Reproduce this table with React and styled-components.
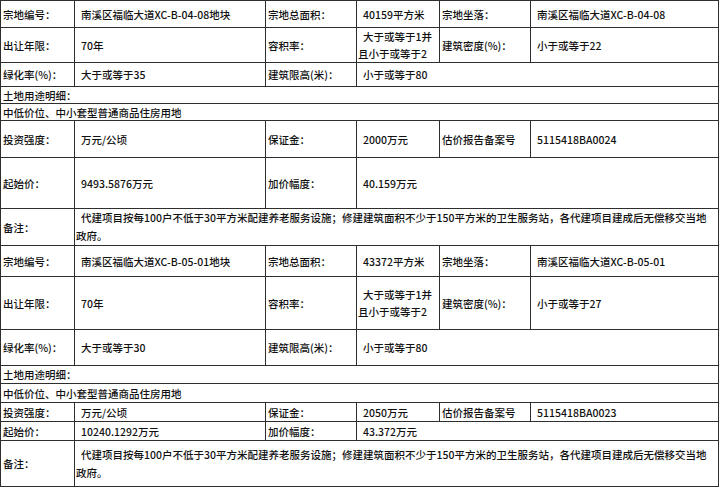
import React from "react";
import styled, { createGlobalStyle } from "styled-components";

const GlobalStyle = createGlobalStyle`
  html, body {
    margin: 0;
    padding: 0;
    background: #fff;
  }
  body {
    font-family: "Noto Sans CJK SC", "Microsoft YaHei", sans-serif;
  }
`;

const Table = styled.table`
  border-collapse: collapse;
  table-layout: fixed;
  width: 718px;
  font-size: 10.5px;
  font-weight: 500;
  color: #111;
`;

const Col = styled.col`
  width: ${(p) => p.$w}px;
`;

const Row = styled.tr`
  height: ${(p) => p.$h}px;
`;

const Cell = styled.td`
  border: 1px solid #2e2e2e;
  padding: 0 1px;
  vertical-align: middle;
  word-break: break-all;
`;

const Label = styled(Cell)`
  padding-left: 2px;
  line-height: 15px;
  white-space: nowrap;
`;

const Value = styled(Cell)`
  line-height: 17px;
  text-indent: 5px;
`;

const Note = styled(Value)`
  line-height: 18px;
  padding-right: 5px;
`;

const NOTE =
  "代建项目按每100户不低于30平方米配建养老服务设施；修建建筑面积不少于150平方米的卫生服务站，各代建项目建成后无偿移交当地政府。";

const lots = [
  {
    id: "04-08",
    no: "南溪区福临大道XC-B-04-08地块",
    area: "40159平方米",
    loc: "南溪区福临大道XC-B-04-08",
    far: "大于或等于1并且小于或等于2",
    density: "小于或等于22",
    green: "大于或等于35",
    limit: "小于或等于80",
    use: "中低价位、中小套型普通商品住房用地",
    invest: "万元/公顷",
    deposit: "2000万元",
    report: "5115418BA0024",
    price: "9493.5876万元",
    step: "40.159万元",
    rows: [27, 35, 24, 17, 17, 37, 51, 37],
  },
  {
    id: "05-01",
    no: "南溪区福临大道XC-B-05-01地块",
    area: "43372平方米",
    loc: "南溪区福临大道XC-B-05-01",
    far: "大于或等于1并且小于或等于2",
    density: "小于或等于27",
    green: "大于或等于30",
    limit: "小于或等于80",
    use: "中低价位、中小套型普通商品住房用地",
    invest: "万元/公顷",
    deposit: "2050万元",
    report: "5115418BA0023",
    price: "10240.1292万元",
    step: "43.372万元",
    rows: [31, 53, 36, 18, 19, 19, 19, 46],
  },
];

const Lot = ({ lot }) => {
  const h = lot.rows;
  return (
    <>
      <Row $h={h[0]}>
        <Label>宗地编号：</Label>
        <Value>{lot.no}</Value>
        <Label>宗地总面积：</Label>
        <Value>{lot.area}</Value>
        <Label>宗地坐落：</Label>
        <Value>{lot.loc}</Value>
      </Row>
      <Row $h={h[1]}>
        <Label>出让年限：</Label>
        <Value>70年</Value>
        <Label>容积率：</Label>
        <Value>{lot.far}</Value>
        <Label>建筑密度(%)：</Label>
        <Value>{lot.density}</Value>
      </Row>
      <Row $h={h[2]}>
        <Label>绿化率(%)：</Label>
        <Value>{lot.green}</Value>
        <Label>建筑限高(米)：</Label>
        <Value colSpan={3}>{lot.limit}</Value>
      </Row>
      <Row $h={h[3]}>
        <Label colSpan={6}>土地用途明细：</Label>
      </Row>
      <Row $h={h[4]}>
        <Label colSpan={6}>{lot.use}</Label>
      </Row>
      <Row $h={h[5]}>
        <Label>投资强度：</Label>
        <Value>{lot.invest}</Value>
        <Label>保证金：</Label>
        <Value>{lot.deposit}</Value>
        <Label>估价报告备案号</Label>
        <Value>{lot.report}</Value>
      </Row>
      <Row $h={h[6]}>
        <Label>起始价：</Label>
        <Value>{lot.price}</Value>
        <Label>加价幅度：</Label>
        <Value colSpan={3}>{lot.step}</Value>
      </Row>
      <Row $h={h[7]}>
        <Label>备注：</Label>
        <Note colSpan={5}>{NOTE}</Note>
      </Row>
    </>
  );
};

export default function App() {
  return (
    <>
      <GlobalStyle />
      <Table>
        <colgroup>
          <Col $w={74} />
          <Col $w={191} />
          <Col $w={91} />
          <Col $w={83} />
          <Col $w={91} />
          <Col $w={188} />
        </colgroup>
        <tbody>
          {lots.map((lot) => (
            <Lot key={lot.id} lot={lot} />
          ))}
        </tbody>
      </Table>
    </>
  );
}
